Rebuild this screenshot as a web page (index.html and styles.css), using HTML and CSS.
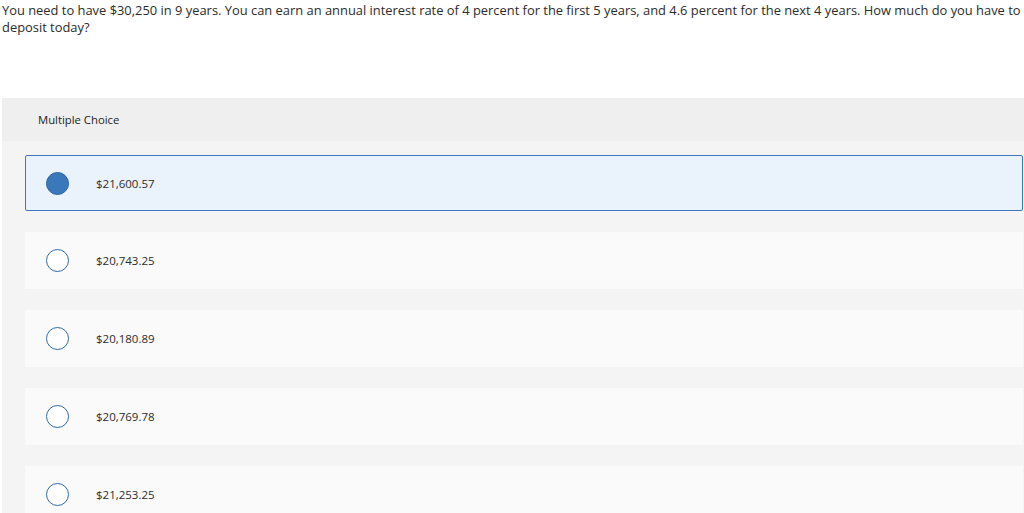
FILE: index.html
```html
<!DOCTYPE html>
<html>
<head>
<meta charset="utf-8">
<link rel="stylesheet" href="styles.css">
</head>
<body>
<p class="question">You need to have $30,250 in 9 years. You can earn an annual interest rate of 4 percent for the first 5 years, and 4.6 percent for the next 4 years. How much do you have to deposit today?</p>
<section class="panel">
  <div class="panel-head">Multiple Choice</div>
  <div class="options">
    <div class="option selected"><span class="radio"></span><span class="label">$21,600.57</span></div>
    <div class="option"><span class="radio"></span><span class="label">$20,743.25</span></div>
    <div class="option"><span class="radio"></span><span class="label">$20,180.89</span></div>
    <div class="option"><span class="radio"></span><span class="label">$20,769.78</span></div>
    <div class="option"><span class="radio"></span><span class="label">$21,253.25</span></div>
  </div>
</section>
</body>
</html>
```
FILE: styles.css
```css
html, body {
  margin: 0;
  padding: 0;
  background: #ffffff;
  overflow: hidden;
}
body {
  font-family: "Open Sans", "Liberation Sans", sans-serif;
  color: #2b2b2b;
}
.question {
  margin: 0;
  padding: 2px 0 0 2px;
  font-size: 12.9px;
  line-height: 17px;
  width: 1024px;
}
.panel {
  margin: 62px 0 0 2px;
  background: #f4f4f4;
}
.panel-head {
  background: #efefef;
  height: 43px;
  display: flex;
  align-items: center;
  padding-left: 36px;
  font-size: 11.3px;
  color: #222;
}
.options {
  padding: 14px 1px 0 23px;
  display: flex;
  flex-direction: column;
  gap: 21px;
}
.option {
  height: 57px;
  background: #fafafa;
  display: flex;
  align-items: center;
  padding-left: 21px;
  box-sizing: border-box;
  font-size: 11.5px;
  color: #2b2b2b;
}
.option.selected {
  height: 56px;
  background: #eaf2fc;
  border: 1px solid #3b78bd;
  border-radius: 2px;
  padding-left: 20px;
}
.radio {
  width: 23px;
  height: 23px;
  box-sizing: border-box;
  border: 1.5px solid #2f6aa8;
  border-radius: 50%;
  background: #ffffff;
  margin-right: 27px;
  flex: none;
}
.selected .radio {
  background: #3b78bb;
  border-color: #2d65a3;
}
```
